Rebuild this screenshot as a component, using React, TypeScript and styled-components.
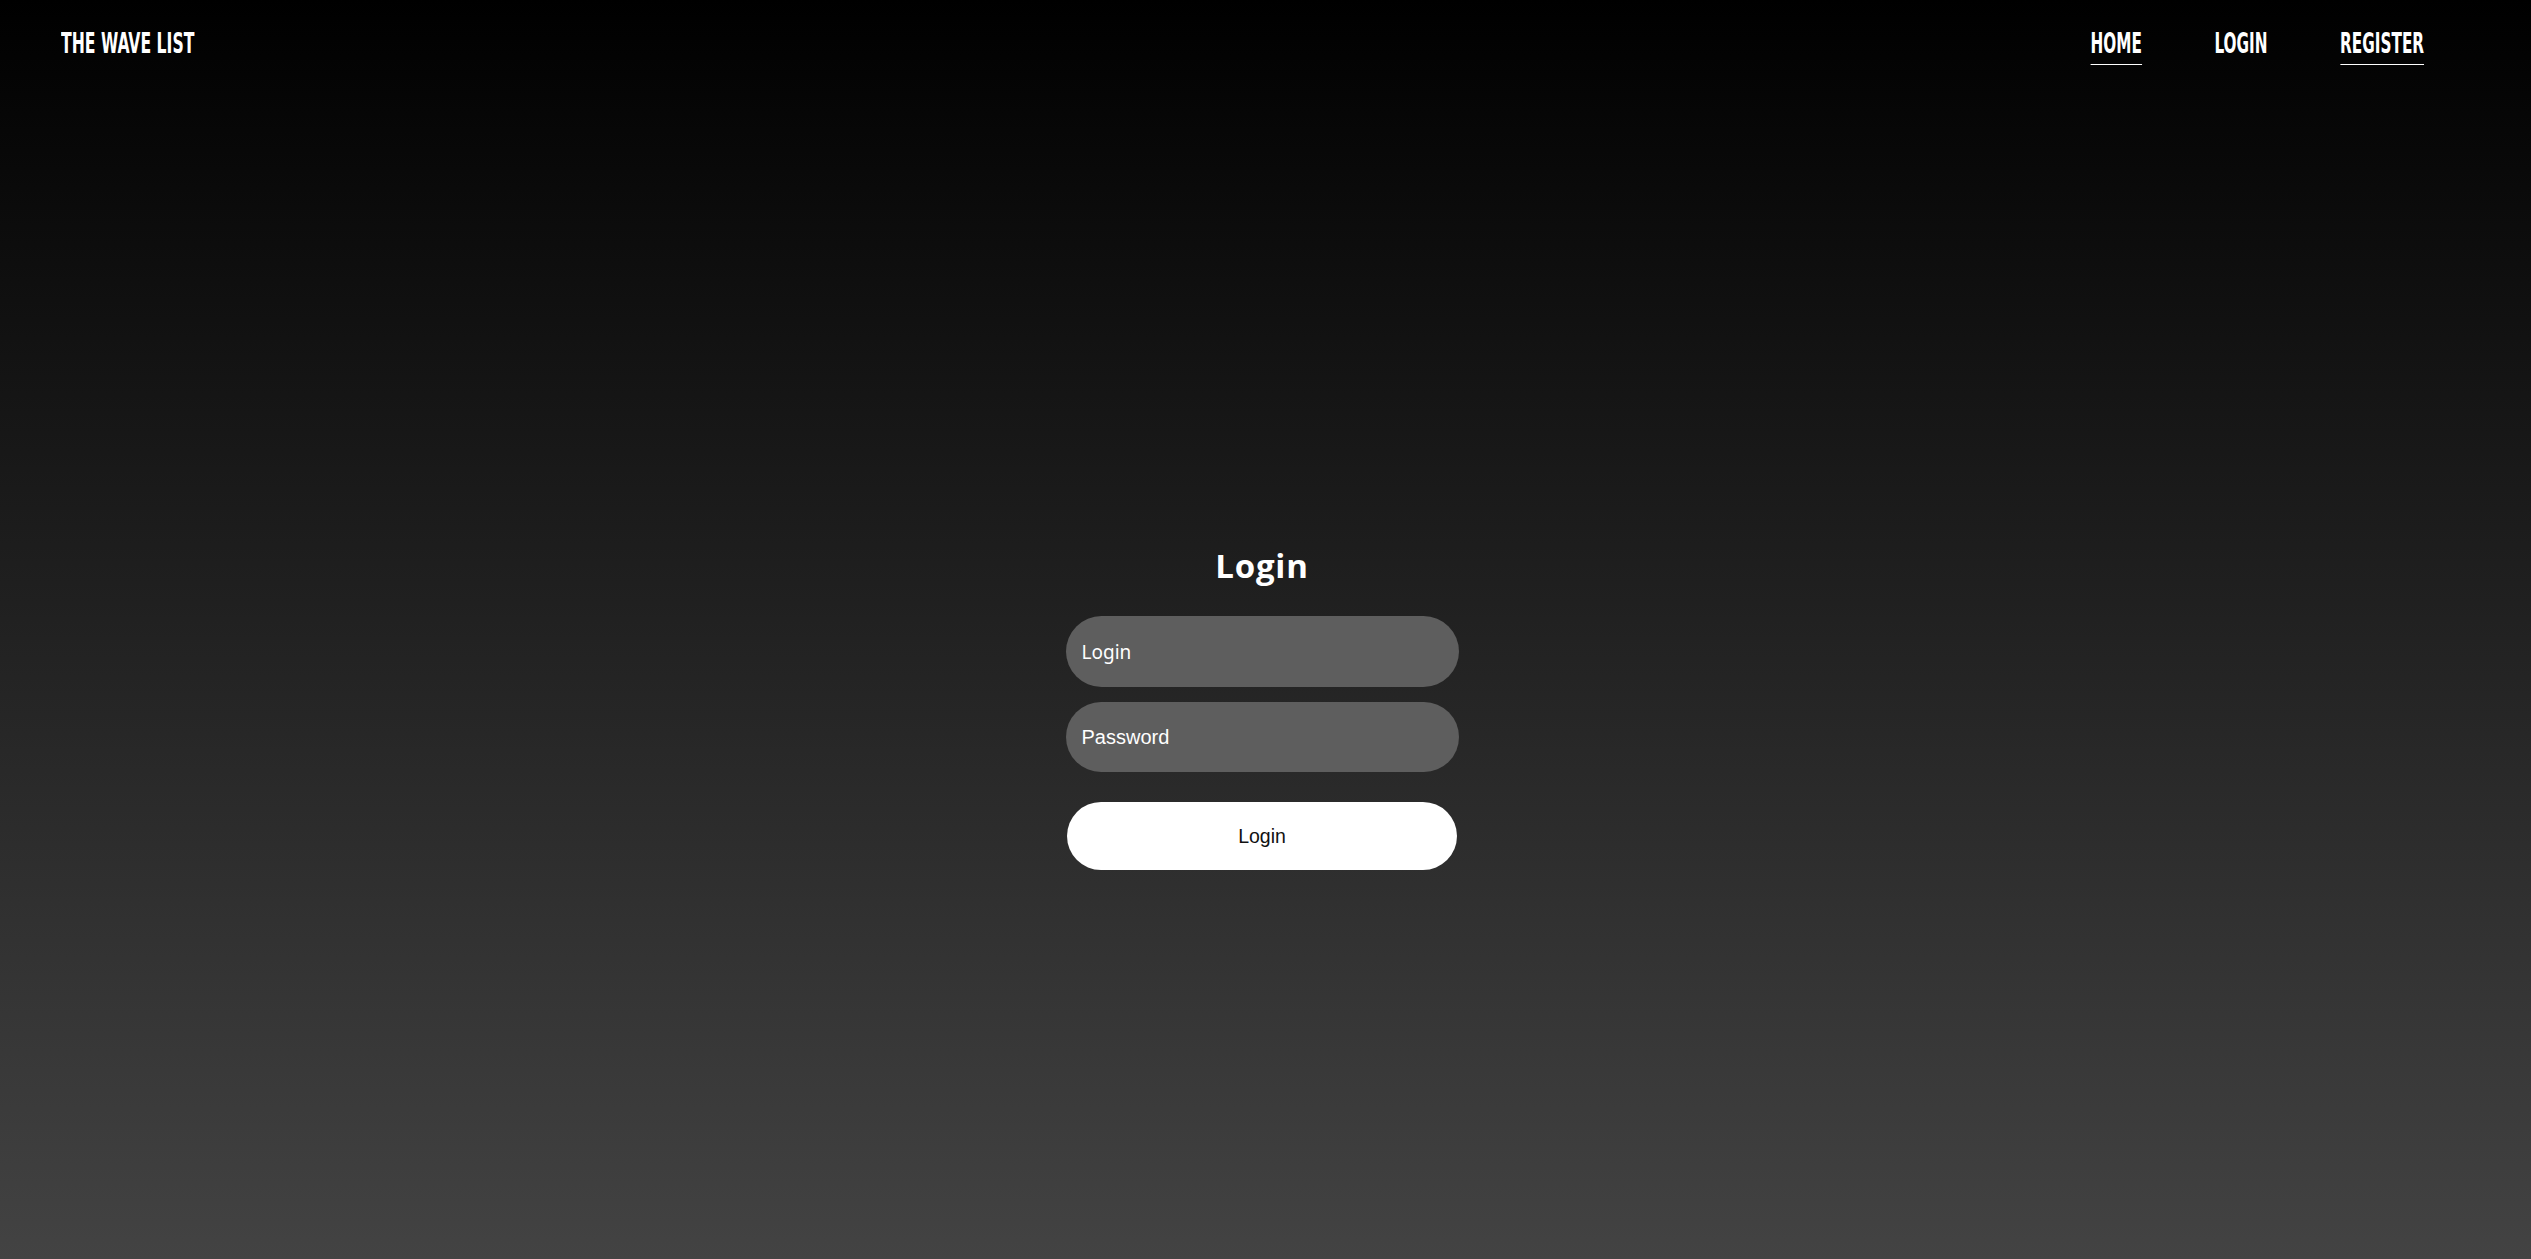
import React from "react";
import styled, { createGlobalStyle } from "styled-components";

const GlobalStyle = createGlobalStyle`
  html, body {
    margin: 0;
    padding: 0;
  }
  body {
    min-height: 100vh;
    background: linear-gradient(to bottom, #000000, #434343);
    background-attachment: fixed;
    font-family: "Liberation Sans", Arial, sans-serif;
    color: #ffffff;
  }
  #root {
    min-height: 100vh;
  }
  * {
    box-sizing: border-box;
  }
`;

const Page = styled.div`
  min-height: 100vh;
  display: flex;
  flex-direction: column;
`;

const Header = styled.header`
  height: 86px;
  display: flex;
  justify-content: space-between;
  align-items: flex-start;
  padding: 29px 107px 0 61px;
`;

const condensed = `
  font-family: "DejaVu Sans Condensed", "DejaVu Sans", sans-serif;
  font-weight: 700;
  font-size: 29px;
  line-height: 1;
  text-transform: uppercase;
  color: #ffffff;
`;

const Logo = styled.a`
  ${condensed}
  display: inline-block;
  text-decoration: none;
  transform: scaleX(0.6);
  transform-origin: left center;
  white-space: nowrap;
`;

const Nav = styled.nav`
  display: flex;
  align-items: flex-start;
  gap: 124px;
  transform: scaleX(0.585);
  transform-origin: right center;
`;

const NavLink = styled.a<{ $underline?: boolean }>`
  ${condensed}
  display: inline-block;
  text-decoration: none;
  padding-bottom: 6px;
  border-bottom: 1px solid ${(p) => (p.$underline ? "#ffffff" : "transparent")};
  white-space: nowrap;
`;

const Main = styled.main`
  flex: 1;
  display: flex;
  flex-direction: column;
  align-items: center;
  padding: 463px 7px 0 0;
`;

const Form = styled.form`
  width: 393px;
  display: flex;
  flex-direction: column;
  align-items: center;
`;

const Title = styled.h1`
  margin: 0 0 34px;
  font-family: "Open Sans", "Noto Sans", sans-serif;
  font-weight: 700;
  font-size: 33px;
  line-height: 1;
  letter-spacing: 0.8px;
  color: #ffffff;
`;

const Input = styled.input<{ $alt?: boolean }>`
  width: 393px;
  height: ${(p) => (p.$alt ? "70px" : "71px")};
  margin-bottom: ${(p) => (p.$alt ? "30px" : "15px")};
  border: none;
  outline: none;
  border-radius: 36px;
  background: #5e5e5e;
  padding: 0 15px 0 16px;
  color: #ffffff;
  font-family: ${(p) =>
    p.$alt ? `"Liberation Sans", Arial, sans-serif` : `"Noto Sans", "Open Sans", sans-serif`};
  font-size: ${(p) => (p.$alt ? "20px" : "19px")};

  &::placeholder {
    color: #ffffff;
    opacity: 1;
  }
`;

const Button = styled.button`
  width: 390px;
  height: 68px;
  border: none;
  border-radius: 34px;
  background: #ffffff;
  color: #111111;
  font-family: "Liberation Sans", Arial, sans-serif;
  font-size: 19.5px;
  cursor: pointer;
`;

export default function App() {
  return (
    <>
      <GlobalStyle />
      <Page>
        <Header>
          <Logo href="#">The Wave List</Logo>
          <Nav>
            <NavLink href="#" $underline>
              Home
            </NavLink>
            <NavLink href="#">Login</NavLink>
            <NavLink href="#" $underline>
              Register
            </NavLink>
          </Nav>
        </Header>
        <Main>
          <Form onSubmit={(e) => e.preventDefault()}>
            <Title>Login</Title>
            <Input type="text" placeholder="Login" />
            <Input type="password" placeholder="Password" $alt />
            <Button type="submit">Login</Button>
          </Form>
        </Main>
      </Page>
    </>
  );
}
